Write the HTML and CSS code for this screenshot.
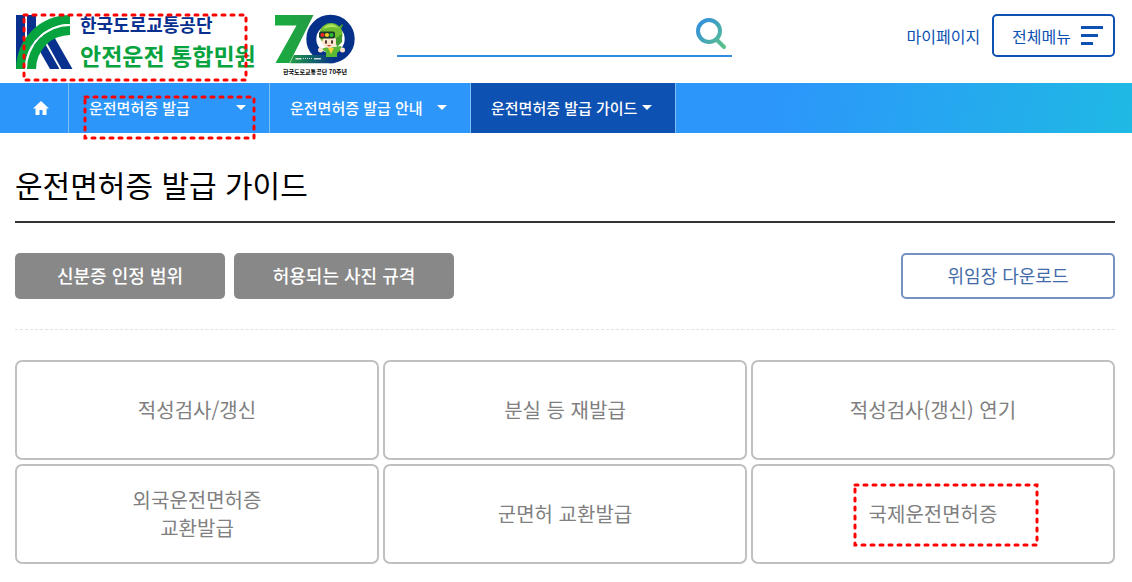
FILE: index.html
```html
<!DOCTYPE html>
<html lang="ko">
<head>
<meta charset="utf-8">
<meta name="viewport" content="width=device-width, initial-scale=1">
<title>운전면허증 발급 가이드</title>
<link rel="stylesheet" href="styles.css">
</head>
<body>
<header class="header">
  <a class="brand" href="#">
    <svg class="brand-mark" viewBox="0 0 57 54" aria-hidden="true">
      <path fill="#07308f" d="M0 0h9v54H0zM11 0h9v30h-9zM14 19L34 54H43.500L23.500 19zM26 19h10.500L56.500 54H45.500z"/>
      <path fill="#07a33e" d="M0 54A54 54 0 0 1 54 0V9A45 45 0 0 0 9 54z"/>
      <path fill="#fff" d="M9 54A45 45 0 0 1 54 9V11A43 43 0 0 0 11 54z"/>
      <path fill="#07a33e" d="M11 54A43 43 0 0 1 54 11V20A34 34 0 0 0 20 54z"/>
    </svg>
    <span class="brand-text">
      <span class="brand-org">한국도로교통공단</span>
      <span class="brand-name">안전운전 통합민원</span>
    </span>
    <svg class="mark mark-brand" aria-hidden="true"><rect class="mark-line" x="2" y="2" width="222" height="65"/></svg>
  </a>
  <a class="anniversary" href="#">
    <svg class="anniversary-mark" viewBox="0 0 80 50" aria-hidden="true">
      <defs>
        <linearGradient id="seven" x1="0" y1="0" x2="1" y2="0"><stop offset="0" stop-color="#18ac40"/><stop offset="1" stop-color="#269b45"/></linearGradient>
        <linearGradient id="road" x1="0" y1="0" x2="1" y2="0"><stop offset="0" stop-color="#219c44"/><stop offset="1" stop-color="#06318a"/></linearGradient>
      </defs>
      <circle cx="55.500" cy="25" r="19.200" fill="#fff" stroke="#06318a" stroke-width="10"/>
      <path fill="url(#seven)" d="M0 1h38.500L14.500 49H0.500L21.500 11.500H0z"/>
      <path fill="url(#road)" d="M19 41h40v8.300H15z"/>
      <path fill="#fff" opacity=".8" d="M20.500 44h6v1.500h-6zM39 44h7v1.500h-7zM28 44h1v1h-1zM30 44h1v1h-1zM32 44h1v1h-1zM34 44h1v1h-1zM36 44h1v1h-1z"/>
      <path fill="#5cb936" d="M46 35l6-2 7 0 7-1 1 3-5 4v4H51v-5z"/>
      <path fill="#f5d43a" d="M53 34l3 6 3-6z"/>
      <circle cx="45.500" cy="36" r="2.500" fill="#ffe2ca"/><circle cx="67.500" cy="36" r="2.500" fill="#ffe2ca"/>
      <path fill="#4da12f" d="M62 15l5-5 1 1-3 6z"/>
      <circle cx="56" cy="20.500" r="11.500" fill="#6fbd31"/>
      <path fill="#b4e45f" d="M48 15c4-6 11-6 15-1-5-2-10-1-15 1z"/>
      <ellipse cx="54.500" cy="28" rx="7.500" ry="6" fill="#ffe4ce"/>
      <path fill="#3f982c" d="M61 24l6-4v8l-5 5-1-4z"/>
      <rect x="44" y="17.500" width="16" height="7" rx="2" fill="#183c2b"/>
      <circle cx="47.500" cy="21" r="2.100" fill="#ef2828"/><circle cx="52" cy="21" r="2.100" fill="#f5c927"/><circle cx="56.500" cy="21" r="2.100" fill="#35bd35"/>
      <ellipse cx="51" cy="28" rx="1" ry="2" fill="#442821"/><ellipse cx="57" cy="28" rx="1" ry="2" fill="#442821"/>
      <path d="M52 31q2.500 3 4 0" fill="#d7453b"/>
    </svg>
    <span class="anniversary-text">한국도로교통공단 70주년</span>
  </a>
  <form class="search" role="search">
    <input class="search-input" type="search" aria-label="검색어">
    <button class="search-button" type="button" aria-label="검색">
      <svg class="search-icon" viewBox="0 0 31 32" aria-hidden="true">
        <defs><linearGradient id="lens" gradientUnits="userSpaceOnUse" x1="2" y1="4" x2="29" y2="30"><stop offset="0" stop-color="#338fdf"/><stop offset="1" stop-color="#5cc485"/></linearGradient></defs>
        <g fill="none" stroke="url(#lens)" stroke-width="4"><circle cx="13" cy="13" r="11"/><path d="M20.500 21.500L28 29" stroke-linecap="round"/></g>
      </svg>
    </button>
  </form>
  <div class="utility">
    <a class="my-page" href="#">마이페이지</a>
    <button class="menu-button" type="button">전체메뉴
      <svg class="menu-icon" viewBox="0 0 22 19" aria-hidden="true"><path fill="#0d52b3" d="M0 0h22v3H0zM0 8h17v3H0zM0 16h12v3H0z"/></svg>
    </button>
  </div>
</header>

<nav class="nav" aria-label="현재 위치">
  <a class="nav-home" href="#" aria-label="홈">
    <svg class="home-icon" viewBox="0 0 16 14" aria-hidden="true"><path fill="#fff" d="M8 0l8 7.500h-2.500V14h-4V9h-3v5h-4V7.500H0z"/></svg>
  </a>
  <div class="nav-item">
    <button class="nav-button" type="button">운전면허증 발급<svg class="arrow" viewBox="0 0 10 5" aria-hidden="true"><path fill="#fff" d="M0 0h10L5 5z"/></svg></button>
    <svg class="mark mark-nav" aria-hidden="true"><rect class="mark-line" x="2" y="2" width="169" height="41"/></svg>
  </div>
  <div class="nav-item">
    <button class="nav-button" type="button">운전면허증 발급 안내<svg class="arrow" viewBox="0 0 10 5" aria-hidden="true"><path fill="#fff" d="M0 0h10L5 5z"/></svg></button>
  </div>
  <div class="nav-item nav-current">
    <button class="nav-button" type="button">운전면허증 발급 가이드<svg class="arrow" viewBox="0 0 10 5" aria-hidden="true"><path fill="#fff" d="M0 0h10L5 5z"/></svg></button>
  </div>
</nav>

<main class="main">
  <h1 class="title">운전면허증 발급 가이드</h1>
  <div class="actions">
    <button class="action" type="button">신분증 인정 범위</button>
    <button class="action action-wide" type="button">허용되는 사진 규격</button>
    <a class="download" href="#">위임장 다운로드</a>
  </div>
  <div class="cards">
    <a class="card" href="#">적성검사/갱신</a>
    <a class="card" href="#">분실 등 재발급</a>
    <a class="card" href="#">적성검사(갱신) 연기</a>
    <a class="card" href="#">외국운전면허증<br>교환발급</a>
    <a class="card" href="#">군면허 교환발급</a>
    <a class="card" href="#">국제운전면허증
      <svg class="mark mark-card" aria-hidden="true"><rect class="mark-line" x="2" y="2" width="182" height="60"/></svg>
    </a>
  </div>
</main>
</body>
</html>
```
FILE: styles.css
```css
* {
  box-sizing: border-box;
}

body {
  margin: 0;
  background: #fff;
  color: #000;
  font-family: "Noto Sans CJK KR", sans-serif;
  font-size: 16px;
  word-break: keep-all;
}

a {
  color: inherit;
  text-decoration: none;
}

button,
input {
  font: inherit;
}

svg {
  display: block;
  flex: none;
}

/* Header */
.header {
  display: flex;
  align-items: flex-start;
  min-height: 83px;
  padding: 14px 17px 0 16px;
}

.brand {
  position: relative;
  display: flex;
  gap: 7px;
  flex: none;
  width: 259px;
}

.brand-mark {
  width: 57px;
  height: 54px;
  margin-top: 1px;
}

.brand-text {
  display: flex;
  flex-direction: column;
  font-weight: 700;
  white-space: nowrap;
}

.brand-org {
  color: #07308f;
  font-size: 18px;
  line-height: 20px;
}

.brand-name {
  color: #07a33e;
  font-size: 23px;
  line-height: 42px;
}

.anniversary {
  flex: none;
  width: 80px;
}

.anniversary-mark {
  width: 80px;
  height: 50px;
}

.anniversary-text {
  display: block;
  margin-top: 3px;
  font-size: 6px;
  font-weight: 700;
  line-height: 10px;
  text-align: center;
  white-space: nowrap;
}

.search {
  display: flex;
  flex: 0 1 335px;
  height: 43px;
  margin-left: 42px;
  border-bottom: 2px solid #338cde;
}

.search-input {
  flex: 1;
  min-width: 0;
  padding: 0 8px;
  border: 0;
  background: transparent;
  outline: none;
}

.search-button {
  padding: 4px 5px 5px 0;
  border: 0;
  background: none;
}

.search-icon {
  width: 31px;
  height: 32px;
}

.utility {
  display: flex;
  align-items: center;
  gap: 12px;
  flex: none;
  margin-left: auto;
  color: #0d52b3;
}

.menu-button {
  display: flex;
  align-items: center;
  gap: 10px;
  height: 43px;
  padding: 0 10px 0 18px;
  border: 2px solid #0d52b3;
  border-radius: 5px;
  background: #fff;
  color: inherit;
}

.menu-icon {
  width: 22px;
  height: 19px;
}

/* Breadcrumb navigation */
.nav {
  display: flex;
  height: 50px;
  background: linear-gradient(100deg, #2c96fb 68%, #1fb9e4 100%);
}

.nav-home {
  display: flex;
  align-items: center;
  justify-content: flex-end;
  width: 68px;
  padding-right: 19px;
}

.home-icon {
  width: 16px;
  height: 14px;
}

.nav-item {
  position: relative;
  min-width: 201px;
  border-left: 1px solid #7fbffc;
}

.nav-button {
  display: flex;
  align-items: center;
  justify-content: space-between;
  gap: 5px;
  width: 100%;
  height: 50px;
  padding: 0 23px 1px 20px;
  border: 0;
  background: none;
  color: #fff;
  font-size: 15px;
  font-weight: 500;
  white-space: nowrap;
}

.nav-current {
  border-right: 1px solid #7fbffc;
}

.nav-current .nav-button {
  background: #0d52b3;
}

.arrow {
  width: 10px;
  height: 5px;
}

/* Content */
.main {
  padding: 30px 17px 18px 15px;
}

.title {
  margin: 0;
  padding-bottom: 16px;
  border-bottom: 2px solid #333;
  font-size: 30px;
  font-weight: 400;
  line-height: 42px;
}

.actions {
  display: flex;
  gap: 9px;
  padding: 30px 0;
  border-bottom: 1px dashed #e2e2e2;
  font-size: 18px;
}

.action {
  width: 210px;
  height: 46px;
  padding: 0 0 2px;
  border: 0;
  border-radius: 5px;
  background: #888;
  color: #fff;
  font-weight: 500;
}

.action-wide {
  width: 220px;
}

.download {
  display: flex;
  align-items: center;
  justify-content: center;
  width: 214px;
  height: 46px;
  margin-left: auto;
  padding-bottom: 2px;
  border: 2px solid #7593c2;
  border-radius: 5px;
  color: #436ba9;
}

.cards {
  display: grid;
  grid-template-columns: repeat(3, 1fr);
  gap: 4px;
  padding-top: 30px;
}

.card {
  position: relative;
  display: flex;
  align-items: center;
  justify-content: center;
  min-height: 100px;
  border: 2px solid #c0c0c0;
  border-radius: 7px;
  color: #808080;
  font-size: 20px;
  line-height: 28px;
  text-align: center;
}

/* Dotted highlight frames */
.mark {
  position: absolute;
  z-index: 1;
  pointer-events: none;
}

.mark-line {
  fill: none;
  stroke: #f00;
  stroke-width: 3px;
  stroke-linecap: round;
  stroke-dasharray: 3 6;
}

.mark-brand {
  top: -1px;
  left: 6px;
  width: 226px;
  height: 69px;
}

.mark-nav {
  top: 12px;
  left: 14px;
  width: 174px;
  height: 45px;
}

.mark-card {
  top: 17px;
  left: 100px;
  width: 187px;
  height: 64px;
}
```
